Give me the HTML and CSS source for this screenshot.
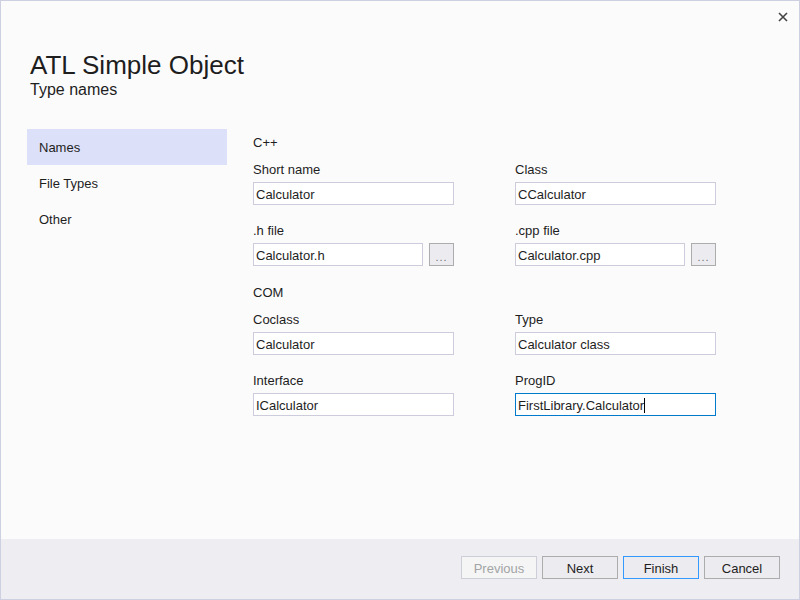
FILE: index.html
```html
<!DOCTYPE html>
<html>
<head>
<meta charset="utf-8">
<title>ATL Simple Object</title>
<link rel="stylesheet" href="styles.css">
</head>
<body>
<div class="window">
  <div class="titlebar">
    <button class="close" aria-label="Close">
      <svg width="10" height="10" viewBox="0 0 10 10"><path d="M1 1L9 9M9 1L1 9" stroke="#444" stroke-width="1.6" fill="none"/></svg>
    </button>
  </div>
  <div class="header">
    <div class="title">ATL Simple Object</div>
    <div class="subtitle">Type names</div>
  </div>
  <div class="content">
    <ul class="sidebar">
      <li class="nav-item selected">Names</li>
      <li class="nav-item">File Types</li>
      <li class="nav-item">Other</li>
    </ul>
    <div class="form">
      <div class="section">C++</div>
      <div class="grid">
        <div class="field">
          <div class="label">Short name</div>
          <div class="textbox">Calculator</div>
        </div>
        <div class="field">
          <div class="label">Class</div>
          <div class="textbox">CCalculator</div>
        </div>
        <div class="field">
          <div class="label">.h file</div>
          <div class="browse-row">
            <div class="textbox grow">Calculator.h</div>
            <button class="browse">...</button>
          </div>
        </div>
        <div class="field">
          <div class="label">.cpp file</div>
          <div class="browse-row">
            <div class="textbox grow">Calculator.cpp</div>
            <button class="browse">...</button>
          </div>
        </div>
      </div>
      <div class="section">COM</div>
      <div class="grid">
        <div class="field">
          <div class="label">Coclass</div>
          <div class="textbox">Calculator</div>
        </div>
        <div class="field">
          <div class="label">Type</div>
          <div class="textbox">Calculator class</div>
        </div>
        <div class="field">
          <div class="label">Interface</div>
          <div class="textbox">ICalculator</div>
        </div>
        <div class="field">
          <div class="label">ProgID</div>
          <div class="textbox focused">FirstLibrary.Calculator<span class="caret"></span></div>
        </div>
      </div>
    </div>
  </div>
  <div class="footer">
    <button class="btn disabled">Previous</button>
    <button class="btn">Next</button>
    <button class="btn default">Finish</button>
    <button class="btn">Cancel</button>
  </div>
</div>
</body>
</html>
```
FILE: styles.css
```css
* { box-sizing: border-box; }
html, body { margin: 0; padding: 0; }
body {
  font-family: "Liberation Sans", Arial, sans-serif;
  color: #1e1e1e;
  background: #fbfbfc;
}
.window {
  width: 800px;
  height: 600px;
  border: 1px solid #ccd0e0;
  background: #fbfbfc;
  display: flex;
  flex-direction: column;
}
.titlebar {
  height: 32px;
  display: flex;
  justify-content: flex-end;
  align-items: center;
  padding-right: 4px;
}
.close {
  width: 24px;
  height: 24px;
  border: 0;
  background: transparent;
  padding: 0;
  display: flex;
  align-items: center;
  justify-content: center;
}
.close svg { display: block; }
.header {
  padding: 17px 0 0 29px;
}
.title {
  font-size: 26px;
  line-height: 30px;
}
.subtitle {
  font-size: 16px;
  line-height: 20px;
}
.content {
  flex: 1;
  display: flex;
  padding: 29px 0 0 26px;
  gap: 26px;
}
.sidebar {
  list-style: none;
  margin: 0;
  padding: 0;
  width: 200px;
}
.nav-item {
  height: 36px;
  line-height: 34px;
  padding-top: 2px;
  font-size: 13px;
  padding-left: 12px;
}
.nav-item.selected { background: #dce0f8; }
.form {
  padding-top: 6px;
  font-size: 13px;
  line-height: 16px;
}
.section {
  height: 16px;
  margin-bottom: 11px;
}
.grid {
  display: grid;
  grid-template-columns: 201px 201px;
  column-gap: 61px;
  row-gap: 18px;
  margin-bottom: 19px;
}
.label {
  height: 16px;
  margin-bottom: 4px;
}
.textbox {
  height: 23px;
  border: 1px solid #ccccdc;
  background: #ffffff;
  padding: 1px 2px 0;
  line-height: 21px;
  font-size: 13px;
  white-space: nowrap;
  overflow: hidden;
}
.textbox.focused { border-color: #007acc; }
.caret {
  display: inline-block;
  width: 1px;
  height: 15px;
  background: #000;
  vertical-align: -3px;
}
.browse-row {
  display: flex;
  gap: 6px;
}
.grow { flex: 1; }
.browse {
  width: 25px;
  height: 23px;
  border: 1px solid #acacac;
  background: #ececf0;
  color: #707070;
  font-family: "Liberation Sans", Arial, sans-serif;
  font-size: 11px;
  line-height: 26px;
  padding: 0;
  letter-spacing: 1px;
}
.footer {
  height: 60px;
  background: #eeeef2;
  display: flex;
  justify-content: flex-end;
  align-items: flex-start;
  gap: 5px;
  padding: 17px 19px 0 0;
}
.btn {
  width: 76px;
  height: 23px;
  border: 1px solid #acacac;
  background: #ececf0;
  color: #1e1e1e;
  font-family: "Liberation Sans", Arial, sans-serif;
  font-size: 13px;
  padding: 2px 0 0;
}
.btn.default { border-color: #3399ff; }
.btn.disabled {
  background: #f5f5f5;
  border-color: #ccceda;
  color: #a2a4a5;
}
```
